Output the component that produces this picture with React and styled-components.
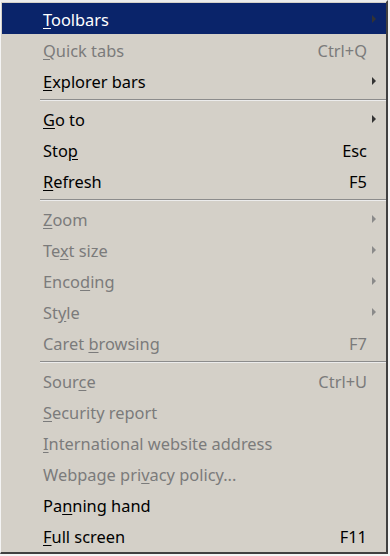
import * as React from 'react';
import styled, { createGlobalStyle } from 'styled-components';

const GlobalStyle = createGlobalStyle`
  html, body {
    margin: 0;
    padding: 0;
    background: #ffffff;
  }
`;

const Page = styled.div`
  width: 390px;
  height: 556px;
  overflow: hidden;
  background: #f4f4f4;
`;

const Menu = styled.div`
  width: 384px;
  padding: 1px 0 1px 1px;
  background: #d4d0c8;
  border-top: 2px solid #ececec;
  border-left: 1px solid #f4f4f4;
  border-right: 2px solid #404040;
  border-bottom: 2px solid #404040;
  font-family: 'Noto Sans', 'Open Sans', sans-serif;
  font-size: 16.4px;
`;

const Row = styled.div`
  display: flex;
  align-items: center;
  box-sizing: border-box;
  height: 31px;
  padding: 2px 10px 0 41px;
  background: ${(p) => (p.active ? '#0a246a' : 'transparent')};
  color: ${(p) => (p.active ? '#ffffff' : p.disabled ? '#7b7b7b' : '#000000')};
`;

const Label = styled.span`
  flex: 1;
  white-space: nowrap;
`;

const Key = styled.span`
  text-decoration: underline;
  text-underline-offset: 2px;
`;

const Shortcut = styled.span`
  margin-right: 9px;
`;

const Arrow = styled.span`
  width: 0;
  height: 0;
  border-top: 4px solid transparent;
  border-bottom: 4px solid transparent;
  border-left: 4px solid ${(p) => (p.disabled ? '#8a8a8a' : '#333333')};
  margin-left: auto;
  margin-bottom: 2px;
`;

const Separator = styled.div`
  height: 7px;
  display: flex;
  align-items: center;
  padding-left: 38px;

  &::after {
    content: '';
    flex: 1;
    height: 2px;
    background: #8c8c8c;
    border-bottom: 1px solid #ececec;
    box-sizing: border-box;
  }
`;

const groups = [
  [
    { pre: '', key: 'T', post: 'oolbars', arrow: true, active: true },
    { pre: '', key: 'Q', post: 'uick tabs', shortcut: 'Ctrl+Q', disabled: true },
    { pre: '', key: 'E', post: 'xplorer bars', arrow: true },
  ],
  [
    { pre: '', key: 'G', post: 'o to', arrow: true },
    { pre: 'Sto', key: 'p', post: '', shortcut: 'Esc' },
    { pre: '', key: 'R', post: 'efresh', shortcut: 'F5' },
  ],
  [
    { pre: '', key: 'Z', post: 'oom', arrow: true, disabled: true },
    { pre: 'Te', key: 'x', post: 't size', arrow: true, disabled: true },
    { pre: 'Enco', key: 'd', post: 'ing', arrow: true, disabled: true },
    { pre: 'St', key: 'y', post: 'le', arrow: true, disabled: true },
    { pre: 'Caret ', key: 'b', post: 'rowsing', shortcut: 'F7', disabled: true },
  ],
  [
    { pre: 'Sour', key: 'c', post: 'e', shortcut: 'Ctrl+U', disabled: true },
    { pre: '', key: 'S', post: 'ecurity report', disabled: true },
    { pre: '', key: 'I', post: 'nternational website address', disabled: true },
    { pre: 'Webpage pri', key: 'v', post: 'acy policy...', disabled: true },
    { pre: 'Pa', key: 'n', post: 'ning hand' },
    { pre: '', key: 'F', post: 'ull screen', shortcut: 'F11' },
  ],
];

export default function App() {
  return (
    <Page>
      <GlobalStyle />
      <Menu>
        {groups.map((items, gi) => (
          <React.Fragment key={gi}>
            {gi > 0 && <Separator />}
            {items.map((item, i) => (
              <Row key={i} active={item.active} disabled={item.disabled}>
                <Label>
                  {item.pre}
                  <Key>{item.key}</Key>
                  {item.post}
                </Label>
                {item.shortcut && <Shortcut>{item.shortcut}</Shortcut>}
                {item.arrow && <Arrow disabled={item.disabled} />}
              </Row>
            ))}
          </React.Fragment>
        ))}
      </Menu>
    </Page>
  );
}
